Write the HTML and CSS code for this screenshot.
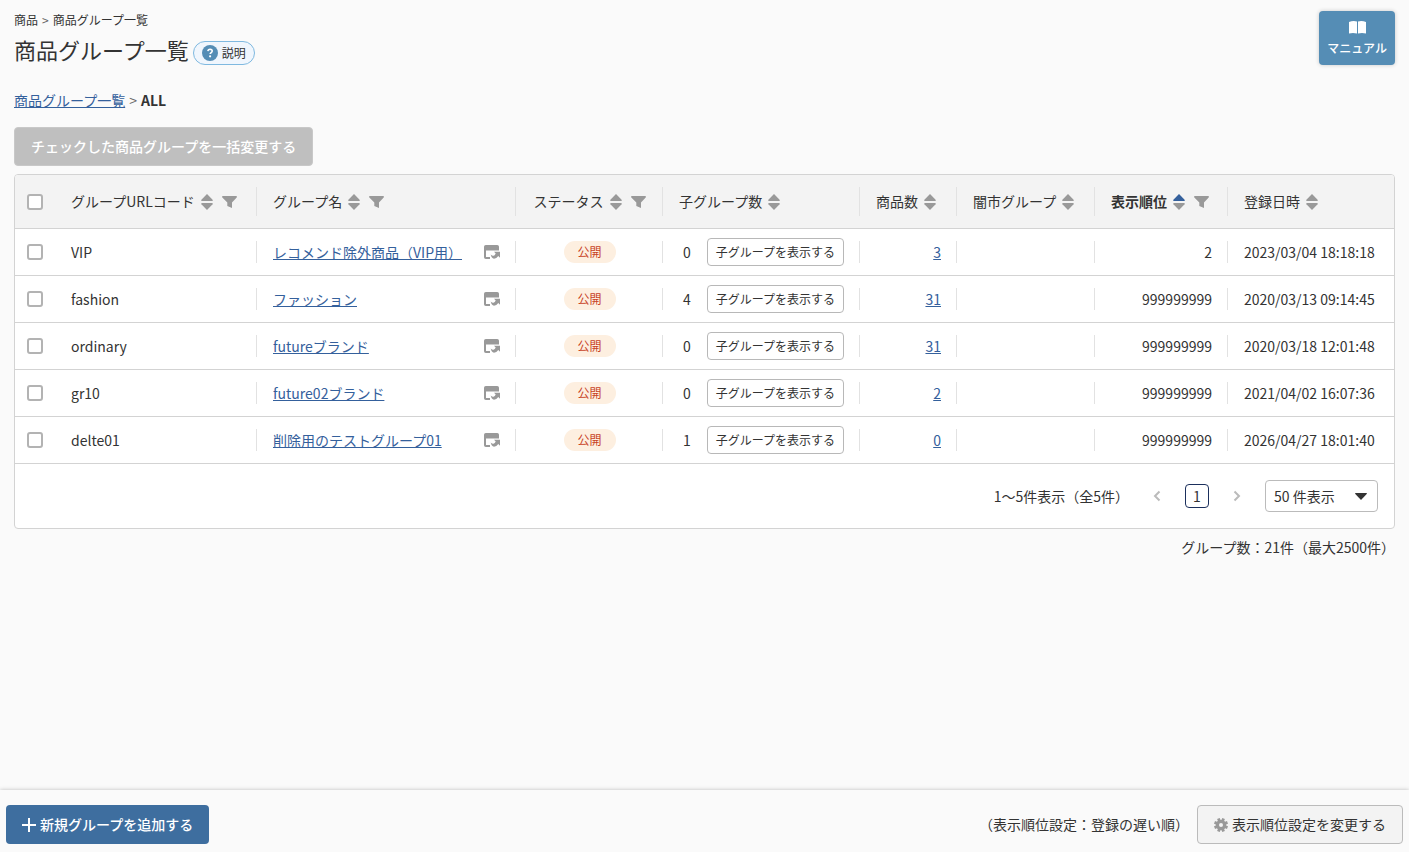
FILE: index.html
```html
<!DOCTYPE html>
<html lang="ja">
<head>
<meta charset="utf-8">
<meta name="viewport" content="width=device-width, initial-scale=1">
<title>商品グループ一覧</title>
<link rel="stylesheet" href="styles.css">
</head>
<body>
<svg class="sprite" aria-hidden="true">
  <symbol id="sort" viewBox="0 0 12 16"><path class="sort-up" d="M6 0l5.600 5.800q.8 1.200-.6 1.200H1q-1.400 0-.6-1.200z"/><path d="M6 16l5.600-5.800q.8-1.200-.6-1.200H1q-1.400 0-.6 1.200z"/></symbol>
  <symbol id="filter" viewBox="0 0 15 12"><path d="M.8 0h13.400q1.200.4.500 1.500L10 6.400V12L5.300 10V6.400L.3 1.500Q-.3.4.8 0z"/></symbol>
  <symbol id="window" viewBox="0 0 16 14"><path d="M1.800 0h11.400q1.800 0 1.800 1.800V5.500H2v6.500H6V14H1.800Q0 14 0 12.200V1.800Q0 0 1.800 0z"/><path d="M10 6.800H16v6l-1.700-1.700Q12.500 13.800 10 13.800 7.500 13.400 6.700 9.600q1.500 1.500 2.800 1.200 1.400-.3 2.200-2.200z"/></symbol>
</svg>
<main class="page">
  <header class="page-head">
    <div>
      <nav class="trail" aria-label="パンくず">商品<span class="sep">&gt;</span>商品グループ一覧</nav>
      <div class="title-row">
        <h1 class="title">商品グループ一覧</h1>
        <button class="help" type="button">
          <svg width="16" height="16" viewBox="0 0 16 16" aria-hidden="true"><circle cx="8" cy="8" r="8" fill="#558db5"/><path d="M5.900 6.200q.2-1.900 2.200-1.900 2.100.1 2.100 1.800 0 1-1.100 1.600-.9.500-.9 1.400" fill="none" stroke="#fff" stroke-width="1.600"/><circle cx="8.100" cy="11.300" r="1.100" fill="#fff"/></svg>
          説明
        </button>
      </div>
    </div>
    <button class="manual" type="button">
      <svg width="17" height="13" viewBox="0 0 17 13" fill="#fff" aria-hidden="true"><path d="M0 1Q4-.5 8 .5V12.500Q4 11.500 0 12.500zM9 .5Q13-.5 17 1V12.500Q13 11.500 9 12.500z"/></svg>
      マニュアル
    </button>
  </header>
  <nav class="crumbs" aria-label="グループ階層"><a href="#all">商品グループ一覧</a><span class="sep">&gt;</span><strong>ALL</strong></nav>
  <button class="btn btn-disabled" type="button" disabled>チェックした商品グループを一括変更する</button>

  <section class="panel">
    <table class="grid">
      <colgroup><col class="c-check"><col class="c-code"><col><col class="c-status"><col class="c-child"><col class="c-items"><col class="c-market"><col class="c-order"><col class="c-date"></colgroup>
      <thead>
        <tr>
          <th class="check"><input class="box" type="checkbox" aria-label="すべて選択"></th>
          <th><div class="head">グループURLコード<svg class="i-sort"><use href="#sort"/></svg><svg class="i-filter"><use href="#filter"/></svg></div></th>
          <th><div class="head">グループ名<svg class="i-sort"><use href="#sort"/></svg><svg class="i-filter"><use href="#filter"/></svg></div></th>
          <th><div class="head head-center">ステータス<svg class="i-sort"><use href="#sort"/></svg><svg class="i-filter"><use href="#filter"/></svg></div></th>
          <th><div class="head">子グループ数<svg class="i-sort"><use href="#sort"/></svg></div></th>
          <th><div class="head">商品数<svg class="i-sort"><use href="#sort"/></svg></div></th>
          <th><div class="head">闇市グループ<svg class="i-sort"><use href="#sort"/></svg></div></th>
          <th aria-sort="ascending"><div class="head head-sorted">表示順位<svg class="i-sort"><use href="#sort"/></svg><svg class="i-filter"><use href="#filter"/></svg></div></th>
          <th><div class="head">登録日時<svg class="i-sort"><use href="#sort"/></svg></div></th>
        </tr>
      </thead>
      <tbody>
        <tr>
          <td class="check"><input class="box" type="checkbox" aria-label="VIPを選択"></td>
          <td>VIP</td>
          <td><div class="name"><a href="#vip">レコメンド除外商品（VIP用）</a><svg class="i-window"><use href="#window"/></svg></div></td>
          <td class="center"><span class="badge">公開</span></td>
          <td><div class="child">0<button class="mini" type="button">子グループを表示する</button></div></td>
          <td class="num"><a href="#vip-items">3</a></td>
          <td></td>
          <td class="num">2</td>
          <td>2023/03/04 18:18:18</td>
        </tr>
        <tr>
          <td class="check"><input class="box" type="checkbox" aria-label="fashionを選択"></td>
          <td>fashion</td>
          <td><div class="name"><a href="#fashion">ファッション</a><svg class="i-window"><use href="#window"/></svg></div></td>
          <td class="center"><span class="badge">公開</span></td>
          <td><div class="child">4<button class="mini" type="button">子グループを表示する</button></div></td>
          <td class="num"><a href="#fashion-items">31</a></td>
          <td></td>
          <td class="num">999999999</td>
          <td>2020/03/13 09:14:45</td>
        </tr>
        <tr>
          <td class="check"><input class="box" type="checkbox" aria-label="ordinaryを選択"></td>
          <td>ordinary</td>
          <td><div class="name"><a href="#ordinary">futureブランド</a><svg class="i-window"><use href="#window"/></svg></div></td>
          <td class="center"><span class="badge">公開</span></td>
          <td><div class="child">0<button class="mini" type="button">子グループを表示する</button></div></td>
          <td class="num"><a href="#ordinary-items">31</a></td>
          <td></td>
          <td class="num">999999999</td>
          <td>2020/03/18 12:01:48</td>
        </tr>
        <tr>
          <td class="check"><input class="box" type="checkbox" aria-label="gr10を選択"></td>
          <td>gr10</td>
          <td><div class="name"><a href="#gr10">future02ブランド</a><svg class="i-window"><use href="#window"/></svg></div></td>
          <td class="center"><span class="badge">公開</span></td>
          <td><div class="child">0<button class="mini" type="button">子グループを表示する</button></div></td>
          <td class="num"><a href="#gr10-items">2</a></td>
          <td></td>
          <td class="num">999999999</td>
          <td>2021/04/02 16:07:36</td>
        </tr>
        <tr>
          <td class="check"><input class="box" type="checkbox" aria-label="delte01を選択"></td>
          <td>delte01</td>
          <td><div class="name"><a href="#delte01">削除用のテストグループ01</a><svg class="i-window"><use href="#window"/></svg></div></td>
          <td class="center"><span class="badge">公開</span></td>
          <td><div class="child">1<button class="mini" type="button">子グループを表示する</button></div></td>
          <td class="num"><a href="#delte01-items">0</a></td>
          <td></td>
          <td class="num">999999999</td>
          <td>2026/04/27 18:01:40</td>
        </tr>
      </tbody>
    </table>
    <div class="pager">
      <span>1〜5件表示（全5件）</span>
      <button class="step" type="button" aria-label="前のページ" disabled><svg width="8" height="12" viewBox="0 0 8 12" aria-hidden="true"><path d="M6.500 1.500L2 6l4.500 4.500"/></svg></button>
      <button class="current" type="button" aria-current="page">1</button>
      <button class="step" type="button" aria-label="次のページ" disabled><svg width="8" height="12" viewBox="0 0 8 12" aria-hidden="true"><path d="M1.500 1.500L6 6l-4.500 4.500"/></svg></button>
      <div class="select-wrap">
        <select class="select" aria-label="表示件数"><option>50 件表示</option><option>100 件表示</option></select>
        <svg class="caret" width="12" height="7" viewBox="0 0 12 7" aria-hidden="true"><path d="M.6 0h10.800q.9.200.3 1L6 7 .3 1Q-.3.200.6 0z"/></svg>
      </div>
    </div>
  </section>
  <p class="total">グループ数：21件（最大2500件）</p>
</main>
<footer class="footer">
  <button class="btn btn-primary" type="button"><svg width="14" height="14" viewBox="0 0 14 14" aria-hidden="true"><path d="M7 0v14M0 7h14" stroke="#fff" stroke-width="2"/></svg>新規グループを追加する</button>
  <div class="footer-right">
    <span>（表示順位設定：登録の遅い順）</span>
    <button class="btn btn-plain" type="button"><svg width="14" height="14" viewBox="0 0 14 14" aria-hidden="true"><g stroke="#999" stroke-width="2.800"><path d="M4.400.5l5.200 13M9.600.5l-5.200 13M.5 4.400l13 5.200M.5 9.600l13-5.200"/></g><circle cx="7" cy="7" r="5.200" fill="#999"/><circle cx="7" cy="7" r="2" fill="#f3f3f3"/></svg>表示順位設定を変更する</button>
  </div>
</footer>
</body>
</html>
```
FILE: styles.css
```css
* { box-sizing: border-box; }
body {
  margin: 0;
  min-height: 100vh;
  display: flex;
  flex-direction: column;
  background: #fafafa;
  color: #333;
  font: 14px/21px "Noto Sans CJK JP", sans-serif;
}
button, select { font: inherit; color: inherit; margin: 0; }
a { color: #34609c; text-decoration: underline; }
.sprite { display: none; }
.page { padding: 11px 14px 24px; }

.page-head { display: flex; justify-content: space-between; align-items: flex-start; }
.trail { font-size: 12px; line-height: 18px; }
.sep { margin: 0 4px; color: #666; }
.title-row { display: flex; align-items: flex-start; gap: 4px; margin-top: 4px; }
.title { margin: 0; font-size: 22px; line-height: 32px; font-weight: 400; }
.help {
  display: flex; align-items: center; gap: 4px;
  height: 24px; margin-top: 8px; padding: 0 8px;
  border: 1px solid #7fb9e0; border-radius: 12px;
  background: #f0f6fd; font-size: 12px; line-height: 18px;
}
.manual {
  display: flex; flex-direction: column; align-items: center; gap: 5px;
  padding: 10px 8px 8px;
  border: 0; border-radius: 4px;
  background: #558db5; color: #fff;
  box-shadow: 0 0 4px rgba(0, 0, 0, .2);
  font-size: 12px; line-height: 18px; font-weight: 500;
}
.crumbs { margin-top: 25px; }

.btn {
  display: inline-flex; align-items: center; gap: 4px;
  min-height: 39px; padding: 0 16px;
  border: 1px solid transparent; border-radius: 4px;
}
.btn-disabled { margin-top: 16px; background: #bfbfbf; border-color: #c8c8c8; color: #fff; font-weight: 500; }
.btn-primary { background: #3e6e9f; color: #fff; font-weight: 500; padding: 0 15px; }
.btn-plain { background: #f3f3f3; border-color: #bbb; }

.panel { margin-top: 8px; border: 1px solid #d3d3d3; border-radius: 4px; background: #fff; overflow: hidden; }
.grid { width: 100%; table-layout: fixed; border-collapse: separate; border-spacing: 0; }
.c-check { width: 40px; }
.c-code { width: 202px; }
.c-status { width: 147px; }
.c-child { width: 197px; }
.c-items { width: 97px; }
.c-market { width: 138px; }
.c-order { width: 133px; }
.c-date { width: 166px; }
.grid th, .grid td {
  padding: 0 16px;
  border-bottom: 1px solid #d3d3d3;
  text-align: left; font-weight: 400; white-space: nowrap;
  background: linear-gradient(#e2e2e2, #e2e2e2) no-repeat right center / 1px 22px;
}
.grid th { height: 54px; background-color: #f3f3f3; background-size: 1px 29px; }
.grid td { height: 47px; }
.grid th:last-child, .grid td:last-child, .grid .check { background-image: none; }
.grid .check { padding: 0 0 0 12px; }
.grid td.center { text-align: center; }
.grid td.num { text-align: right; }
.box {
  appearance: none; display: block; width: 16px; height: 16px; margin: 0;
  border: 2px solid #b3b3b3; border-radius: 3px; background: #fff;
}
.head { display: flex; align-items: center; }
.head-center { justify-content: center; }
.head-sorted { font-weight: 700; }
.head-sorted .i-sort { color: #34609c; }
.i-sort { width: 12px; height: 16px; margin-left: 6px; fill: #999; color: #999; flex: none; }
.sort-up { fill: currentColor; }
.i-filter { width: 15px; height: 12px; margin-left: 9px; fill: #999; flex: none; }
.i-window { width: 16px; height: 14px; fill: #999; flex: none; }
.name { display: flex; align-items: center; justify-content: space-between; }
.badge {
  display: block; width: 52px; margin: 0 auto; border-radius: 11px;
  background: #fdefe0; color: #c8421f; font-size: 12px; line-height: 22px;
}
.child { display: flex; align-items: center; justify-content: flex-end; gap: 16px; }
.mini {
  height: 28px; padding: 0 8px; border: 1px solid #b8b8b8; border-radius: 4px;
  background: #fff; font-size: 12px; line-height: 18px;
}

.pager { display: flex; align-items: center; justify-content: flex-end; gap: 16px; padding: 16px; }
.step {
  width: 24px; height: 24px; padding: 0; border: 0; background: none;
  display: grid; place-items: center;
}
.step path { fill: none; stroke: #bbb; stroke-width: 2; }
.current {
  width: 24px; height: 24px; padding: 0; border: 1px solid #1b2f5c; border-radius: 4px;
  background: #fff; line-height: 20px;
}
.select-wrap { position: relative; }
.select {
  appearance: none; display: block; width: 113px; height: 32px; padding: 0 8px;
  border: 1px solid #bbb; border-radius: 4px; background: #fff;
}
.caret { position: absolute; right: 11px; top: 13px; fill: #333; pointer-events: none; }
.total { margin: 8px 0 0; text-align: right; }

.footer {
  position: sticky; bottom: 0; margin-top: auto;
  display: flex; align-items: center; justify-content: space-between;
  padding: 15px 6px 8px; background: #fafafa;
  box-shadow: 0 0 4px rgba(0, 0, 0, .25);
}
.footer-right { display: flex; align-items: center; gap: 8px; }
```
